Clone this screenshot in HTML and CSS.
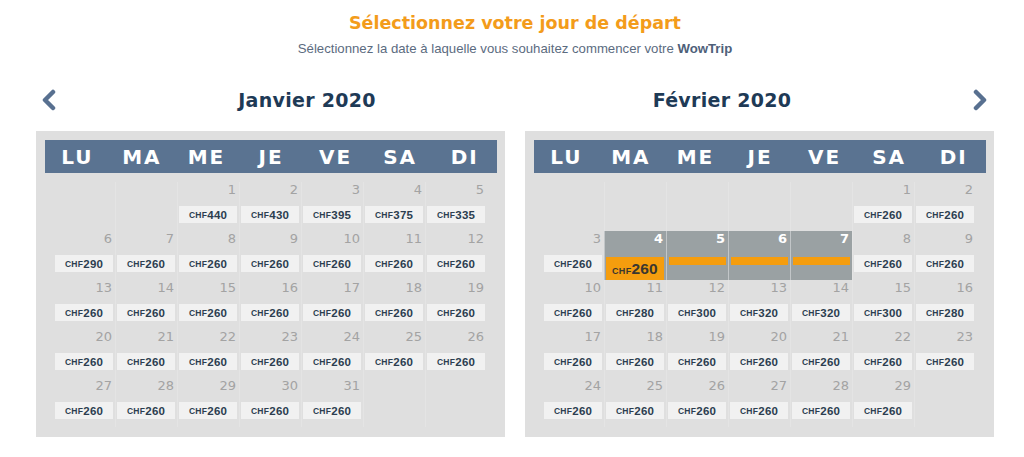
FILE: index.html
```html
<!DOCTYPE html>
<html lang="fr">
<head>
<meta charset="utf-8">
<title>Sélectionnez votre jour de départ</title>
<link rel="stylesheet" href="styles.css">
</head>
<body>
<div class="page">
  <h1 class="title">Sélectionnez votre jour de départ</h1>
  <p class="subtitle">Sélectionnez la date à laquelle vous souhaitez commencer votre <b>WowTrip</b></p>

  <div class="months">
    <section class="month">
      <div class="month-head">
        <div class="nav nav-prev">
          <svg width="16" height="22" viewBox="0 0 16 22"><path d="M12 3 L4 11 L12 19" fill="none" stroke="#587090" stroke-width="4.5" stroke-linecap="round" stroke-linejoin="round"/></svg>
        </div>
        <h2 class="month-title">Janvier 2020</h2>
      </div>
      <div class="cal">
        <div class="weekdays"><span>LU</span><span>MA</span><span>ME</span><span>JE</span><span>VE</span><span>SA</span><span>DI</span></div>
        <div class="grid">
          <div class="cell"></div>
          <div class="cell"></div>
          <div class="cell"><span class="day">1</span><span class="price"><small>CHF</small>440</span></div>
          <div class="cell"><span class="day">2</span><span class="price"><small>CHF</small>430</span></div>
          <div class="cell"><span class="day">3</span><span class="price"><small>CHF</small>395</span></div>
          <div class="cell"><span class="day">4</span><span class="price"><small>CHF</small>375</span></div>
          <div class="cell"><span class="day">5</span><span class="price"><small>CHF</small>335</span></div>

          <div class="cell"><span class="day">6</span><span class="price"><small>CHF</small>290</span></div>
          <div class="cell"><span class="day">7</span><span class="price"><small>CHF</small>260</span></div>
          <div class="cell"><span class="day">8</span><span class="price"><small>CHF</small>260</span></div>
          <div class="cell"><span class="day">9</span><span class="price"><small>CHF</small>260</span></div>
          <div class="cell"><span class="day">10</span><span class="price"><small>CHF</small>260</span></div>
          <div class="cell"><span class="day">11</span><span class="price"><small>CHF</small>260</span></div>
          <div class="cell"><span class="day">12</span><span class="price"><small>CHF</small>260</span></div>

          <div class="cell"><span class="day">13</span><span class="price"><small>CHF</small>260</span></div>
          <div class="cell"><span class="day">14</span><span class="price"><small>CHF</small>260</span></div>
          <div class="cell"><span class="day">15</span><span class="price"><small>CHF</small>260</span></div>
          <div class="cell"><span class="day">16</span><span class="price"><small>CHF</small>260</span></div>
          <div class="cell"><span class="day">17</span><span class="price"><small>CHF</small>260</span></div>
          <div class="cell"><span class="day">18</span><span class="price"><small>CHF</small>260</span></div>
          <div class="cell"><span class="day">19</span><span class="price"><small>CHF</small>260</span></div>

          <div class="cell"><span class="day">20</span><span class="price"><small>CHF</small>260</span></div>
          <div class="cell"><span class="day">21</span><span class="price"><small>CHF</small>260</span></div>
          <div class="cell"><span class="day">22</span><span class="price"><small>CHF</small>260</span></div>
          <div class="cell"><span class="day">23</span><span class="price"><small>CHF</small>260</span></div>
          <div class="cell"><span class="day">24</span><span class="price"><small>CHF</small>260</span></div>
          <div class="cell"><span class="day">25</span><span class="price"><small>CHF</small>260</span></div>
          <div class="cell"><span class="day">26</span><span class="price"><small>CHF</small>260</span></div>

          <div class="cell"><span class="day">27</span><span class="price"><small>CHF</small>260</span></div>
          <div class="cell"><span class="day">28</span><span class="price"><small>CHF</small>260</span></div>
          <div class="cell"><span class="day">29</span><span class="price"><small>CHF</small>260</span></div>
          <div class="cell"><span class="day">30</span><span class="price"><small>CHF</small>260</span></div>
          <div class="cell"><span class="day">31</span><span class="price"><small>CHF</small>260</span></div>
          <div class="cell"></div>
          <div class="cell"></div>
        </div>
      </div>
    </section>

    <section class="month month-right">
      <div class="month-head">
        <h2 class="month-title">Février 2020</h2>
        <div class="nav nav-next">
          <svg width="16" height="22" viewBox="0 0 16 22"><path d="M4 3 L12 11 L4 19" fill="none" stroke="#587090" stroke-width="4.5" stroke-linecap="round" stroke-linejoin="round"/></svg>
        </div>
      </div>
      <div class="cal">
        <div class="weekdays"><span>LU</span><span>MA</span><span>ME</span><span>JE</span><span>VE</span><span>SA</span><span>DI</span></div>
        <div class="grid">
          <div class="cell"></div>
          <div class="cell"></div>
          <div class="cell"></div>
          <div class="cell"></div>
          <div class="cell"></div>
          <div class="cell"><span class="day">1</span><span class="price"><small>CHF</small>260</span></div>
          <div class="cell"><span class="day">2</span><span class="price"><small>CHF</small>260</span></div>

          <div class="cell"><span class="day">3</span><span class="price"><small>CHF</small>260</span></div>
          <div class="cell range"><span class="day">4</span><span class="price selected"><small>CHF</small>260</span></div>
          <div class="cell range"><span class="day">5</span><span class="bar"></span></div>
          <div class="cell range"><span class="day">6</span><span class="bar"></span></div>
          <div class="cell range"><span class="day">7</span><span class="bar"></span></div>
          <div class="cell"><span class="day">8</span><span class="price"><small>CHF</small>260</span></div>
          <div class="cell"><span class="day">9</span><span class="price"><small>CHF</small>260</span></div>

          <div class="cell"><span class="day">10</span><span class="price"><small>CHF</small>260</span></div>
          <div class="cell"><span class="day">11</span><span class="price"><small>CHF</small>280</span></div>
          <div class="cell"><span class="day">12</span><span class="price"><small>CHF</small>300</span></div>
          <div class="cell"><span class="day">13</span><span class="price"><small>CHF</small>320</span></div>
          <div class="cell"><span class="day">14</span><span class="price"><small>CHF</small>320</span></div>
          <div class="cell"><span class="day">15</span><span class="price"><small>CHF</small>300</span></div>
          <div class="cell"><span class="day">16</span><span class="price"><small>CHF</small>280</span></div>

          <div class="cell"><span class="day">17</span><span class="price"><small>CHF</small>260</span></div>
          <div class="cell"><span class="day">18</span><span class="price"><small>CHF</small>260</span></div>
          <div class="cell"><span class="day">19</span><span class="price"><small>CHF</small>260</span></div>
          <div class="cell"><span class="day">20</span><span class="price"><small>CHF</small>260</span></div>
          <div class="cell"><span class="day">21</span><span class="price"><small>CHF</small>260</span></div>
          <div class="cell"><span class="day">22</span><span class="price"><small>CHF</small>260</span></div>
          <div class="cell"><span class="day">23</span><span class="price"><small>CHF</small>260</span></div>

          <div class="cell"><span class="day">24</span><span class="price"><small>CHF</small>260</span></div>
          <div class="cell"><span class="day">25</span><span class="price"><small>CHF</small>260</span></div>
          <div class="cell"><span class="day">26</span><span class="price"><small>CHF</small>260</span></div>
          <div class="cell"><span class="day">27</span><span class="price"><small>CHF</small>260</span></div>
          <div class="cell"><span class="day">28</span><span class="price"><small>CHF</small>260</span></div>
          <div class="cell"><span class="day">29</span><span class="price"><small>CHF</small>260</span></div>
          <div class="cell"></div>
        </div>
      </div>
    </section>
  </div>
</div>
</body>
</html>
```

FILE: styles.css
```css
* { box-sizing: border-box; }

html, body {
  margin: 0;
  padding: 0;
  background: #ffffff;
}

body {
  font-family: "DejaVu Sans", "Liberation Sans", sans-serif;
}

.page {
  padding: 11px 30px 0 36px;
}

.title {
  margin: 0;
  font-family: "DejaVu Sans", sans-serif;
  font-weight: 700;
  font-size: 17.5px;
  line-height: 24px;
  color: #f39c1b;
  text-align: center;
}

.subtitle {
  margin: 5px 0 0;
  font-family: "Liberation Sans", Arial, sans-serif;
  font-size: 13.2px;
  line-height: 18px;
  color: #5b6b80;
  text-align: center;
}

.subtitle b {
  color: #4e6079;
}

.months {
  display: flex;
  gap: 20px;
  margin-top: 24px;
}

.month {
  width: 469px;
  display: flex;
  flex-direction: column;
}

.month-head {
  display: flex;
  align-items: center;
  height: 36px;
  margin-bottom: 13px;
}

.nav {
  width: 73px;
  display: flex;
  align-items: center;
}

.nav-prev {
  padding-left: 5px;
}

.nav-next {
  width: 75px;
  justify-content: flex-end;
  padding-right: 6px;
}

.month-title {
  flex: 1;
  margin: 0;
  text-align: center;
  font-family: "DejaVu Sans", sans-serif;
  font-weight: 700;
  font-size: 19px;
  letter-spacing: 0.3px;
  color: #1e3a56;
}

.cal {
  background: #dfdfdf;
  padding: 9px 8px 10px 9px;
}

.weekdays {
  display: grid;
  grid-template-columns: repeat(7, 1fr);
  height: 33px;
  background: #5a7391;
  align-items: center;
}

.weekdays span {
  text-align: center;
  color: #ffffff;
  font-family: "DejaVu Sans", sans-serif;
  font-weight: 700;
  font-size: 20px;
  letter-spacing: 2px;
}

.grid {
  display: grid;
  grid-template-columns: repeat(7, 62px);
  grid-auto-rows: 49px;
  margin: 9px 0 0 8px;
}

.cell {
  display: flex;
  flex-direction: column;
}

.cell:not(:nth-child(7n+1)) {
  box-shadow: inset 1px 0 0 rgba(255, 255, 255, 0.16);
}

.day {
  display: block;
  height: 16px;
  font-family: "DejaVu Sans", sans-serif;
  font-size: 13px;
  line-height: 16px;
  color: #a3a3a3;
  text-align: right;
  padding-right: 3px;
}

.price {
  margin: 8px 2px 0;
  height: 17px;
  background: #f1f1f1;
  display: flex;
  align-items: center;
  justify-content: center;
  font-family: "Liberation Sans", Arial, sans-serif;
  font-weight: 700;
  font-size: 11.5px;
  color: #2c3e50;
  letter-spacing: 0.2px;
}

.price small {
  font-size: 8.5px;
  letter-spacing: 0.3px;
}

.cell.range {
  background: #9aa1a3;
}

.cell.range:not(:nth-child(7n+1)) {
  box-shadow: inset 1px 0 0 rgba(255, 255, 255, 0.4);
}

.cell.range .day {
  color: #ffffff;
  font-weight: 700;
}

.price.selected {
  margin: 10px 2px 0;
  height: 23px;
  background: #f59d0e;
  color: #3a3630;
  font-size: 15.5px;
  padding-top: 1px;
}

.price.selected small {
  font-size: 9px;
  margin-top: 3px;
}

.bar {
  display: block;
  margin: 10px 2px 0 3px;
  height: 8px;
  background: #f59d0e;
}
```
